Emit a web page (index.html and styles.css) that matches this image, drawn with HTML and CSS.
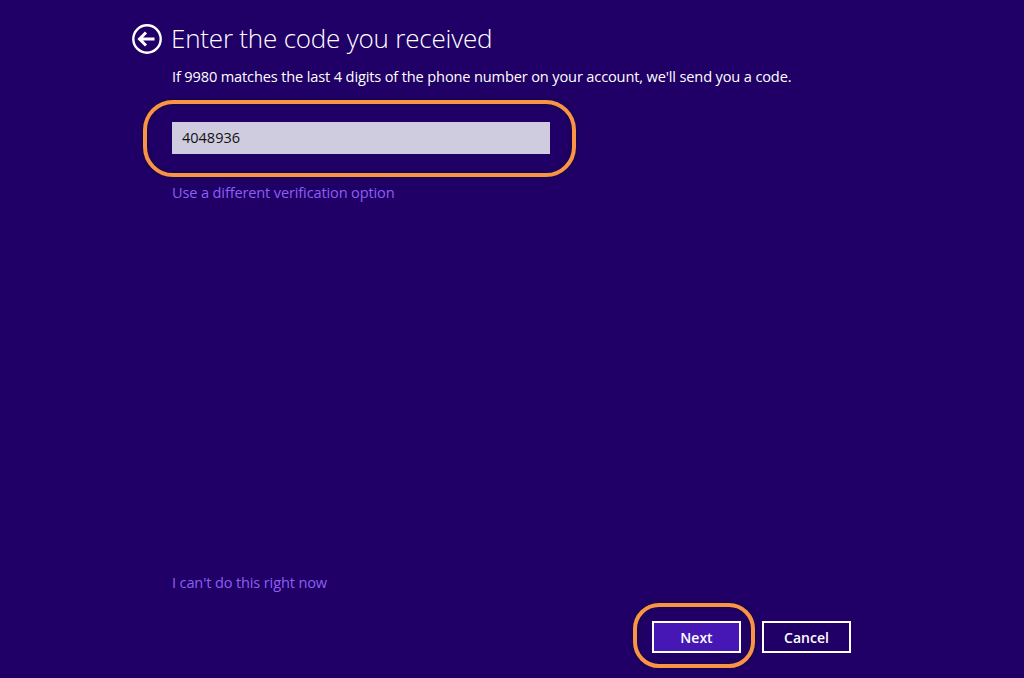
FILE: index.html
```html
<!DOCTYPE html>
<html>
<head>
<meta charset="utf-8">
<link rel="stylesheet" href="styles.css">
</head>
<body>
<div class="page">
  <div class="header">
    <svg class="back" width="30" height="30" viewBox="0 0 30 30">
      <circle cx="15" cy="15" r="13.7" fill="none" stroke="#fff" stroke-width="2.4"/>
      <path d="M7.5 15 H22.5 M14 8.5 L7.5 15 L14 21.5" fill="none" stroke="#fff" stroke-width="3"/>
    </svg>
    <h1 class="title">Enter the code you received</h1>
  </div>
  <div class="content">
    <p class="desc">If 9980 matches the last 4 digits of the phone number on your account, we'll send you a code.</p>
    <div class="field-wrap highlight-field">
      <div class="field">4048936</div>
    </div>
    <a class="link">Use a different verification option</a>
  </div>
  <div class="footer">
    <a class="link">I can't do this right now</a>
    <div class="buttons">
      <div class="btn-wrap highlight-btn"><button class="btn primary">Next</button></div>
      <button class="btn">Cancel</button>
    </div>
  </div>
</div>
</body>
</html>
```
FILE: styles.css
```css
html, body {
  margin: 0;
  height: 100%;
  background: #200066;
  color: #fff;
  font-family: "Open Sans", "Noto Sans", sans-serif;
}
.page {
  height: 678px;
  box-sizing: border-box;
  padding: 24px 0 0 132px;
  display: flex;
  flex-direction: column;
}
.header {
  display: flex;
  align-items: center;
  gap: 9px;
  height: 30px;
}
.back { display: block; }
.title {
  margin: 0;
  font-weight: 300;
  font-size: 26px;
  line-height: 30px;
  letter-spacing: -0.2px;
  position: relative;
  top: -1px;
}
.content {
  padding-left: 40px;
  flex: 1;
}
.desc {
  margin: 12px 0 0;
  font-size: 14.6px;
  line-height: 20px;
  letter-spacing: -0.15px;
}
.field-wrap {
  position: relative;
  margin-top: 36px;
  width: 378px;
}
.highlight-field::before {
  content: "";
  position: absolute;
  left: -29px; top: -22px; right: -26px; bottom: -23px;
  border: 4.5px solid #f89444;
  border-radius: 30px;
  box-shadow: 0 0 5px rgba(0,0,0,0.35), inset 0 0 5px rgba(0,0,0,0.35);
}
.field {
  height: 32px;
  background: #d0cce0;
  color: #111;
  font-size: 14.5px;
  line-height: 32px;
  padding-left: 10px;
}
.link {
  display: block;
  color: #8c5ff2;
  font-size: 14.6px;
  line-height: 20px;
  letter-spacing: -0.15px;
}
.content .link { margin-top: 28px; }
.footer {
  padding-left: 40px;
  padding-bottom: 25px;
}
.buttons {
  display: flex;
  gap: 21px;
  margin-top: 29px;
  padding-left: 480px;
}
.btn-wrap { position: relative; }
.highlight-btn::before {
  content: "";
  position: absolute;
  left: -19px; top: -18px; right: -14px; bottom: -15px;
  border: 4.5px solid #f89444;
  border-radius: 26px;
  box-shadow: 0 0 5px rgba(0,0,0,0.35), inset 0 0 5px rgba(0,0,0,0.35);
}
.btn {
  width: 89px;
  height: 32px;
  box-sizing: border-box;
  border: 2px solid #fff;
  background: transparent;
  color: #fff;
  font-family: "Open Sans", "Noto Sans", sans-serif;
  font-weight: 600;
  font-size: 14px;
  padding: 0;
  display: block;
}
.btn.primary { background: #4617b4; }
```
